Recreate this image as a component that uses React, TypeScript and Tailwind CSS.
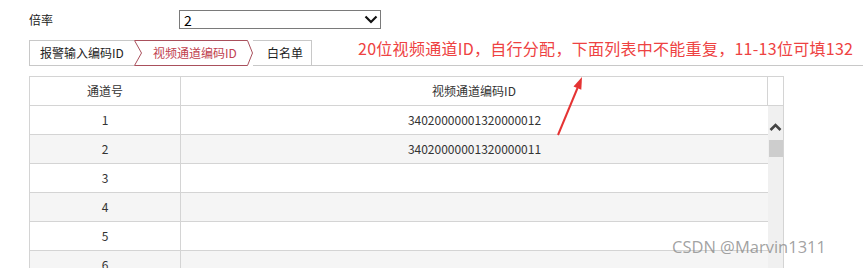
import React from "react";

const rows = [
  { no: "1", id: "34020000001320000012" },
  { no: "2", id: "34020000001320000011" },
  { no: "3", id: "" },
  { no: "4", id: "" },
  { no: "5", id: "" },
  { no: "6", id: "" },
];

export default function App() {
  return (
    <div className="relative w-[863px] h-[268px] overflow-hidden bg-white text-[12px] text-[#333] font-['Noto_Sans_CJK_SC','Noto_Sans',sans-serif]">
      <div className="pt-[10px] pl-[29px]">
        {/* 倍率 row */}
        <div className="flex items-center h-[19px]">
          <div className="w-[150px] text-[12px] text-[#222]">倍率</div>
          <div className="w-[202px] h-[19px] border border-[#7a7a7a] flex items-center justify-between pl-[4px] pr-[2px] text-[14px] leading-none text-black">
            <span>2</span>
            <svg width="14" height="9" viewBox="0 0 14 9">
              <polyline points="1.5,1.5 7,7 12.5,1.5" fill="none" stroke="#111" strokeWidth="2.2" />
            </svg>
          </div>
        </div>

        {/* Tabs row */}
        <div className="mt-[11px] flex h-[26px]">
          <div className="flex h-[26px]">
            <div className="w-[105px] h-[26px] border-l border-y border-[#c8c8c8] pl-[10px] flex items-center text-[12px] text-[#222]">
              报警输入编码ID
            </div>
            <div className="relative w-[119px] h-[26px] flex items-center pl-[19px] text-[12px] text-[#c0414f]">
              <svg className="absolute inset-0" width="119" height="26" viewBox="0 0 119 26">
                <polygon
                  points="0.5,0.5 113.5,0.5 118.5,13 113.5,25.5 0.5,25.5 7.5,13"
                  fill="#fff"
                  stroke="#a9505c"
                  strokeWidth="1"
                />
              </svg>
              <span className="relative">视频通道编码ID</span>
            </div>
            <div className="w-[59px] h-[26px] border-y border-r border-[#c8c8c8] pl-[14px] flex items-center text-[12px] text-[#222]">
              白名单
            </div>
          </div>
          <div className="flex-1 h-[26px] border-b border-[#c8c8c8] pl-[46px]">
            <div className="text-[16px] leading-[16px] tracking-[0.28px] text-[#ee4242] whitespace-nowrap">
              20位视频通道ID，自行分配，下面列表中不能重复，11-13位可填132
            </div>
          </div>
        </div>

        {/* Table */}
        <div className="mt-[10px] w-[755px]">
          <div className="flex h-[30px] border border-[#d4d4d4]">
            <div className="w-[151px] border-r border-[#d4d4d4] flex items-center justify-center">通道号</div>
            <div className="w-[587px] border-r border-[#d4d4d4] flex items-center justify-center">视频通道编码ID</div>
            <div className="w-[15px]"></div>
          </div>
          <div className="flex border-x border-[#d4d4d4]">
            <div className="w-[738px]">
              {rows.map((r, i) => (
                <div
                  key={r.no}
                  className={`flex h-[29px] border-b border-[#d4d4d4] ${i % 2 === 1 ? "bg-[#f5f5f5]" : "bg-white"}`}
                >
                  <div className="w-[151px] border-r border-[#d4d4d4] flex items-center justify-center">{r.no}</div>
                  <div className="flex-1 flex items-center justify-center">{r.id}</div>
                </div>
              ))}
            </div>
            <div className="w-[15px] bg-[#f0f0f0] flex flex-col items-center">
              <svg className="mt-[17px]" width="13" height="9" viewBox="0 0 13 9">
                <polyline points="1.5,7 6.5,2 11.5,7" fill="none" stroke="#444" strokeWidth="2.6" />
              </svg>
              <div className="mt-[8px] w-[14px] h-[17px] bg-[#cdcdcd]"></div>
            </div>
          </div>
        </div>
      </div>

      {/* Red annotation arrow */}
      <svg className="absolute left-0 top-0 pointer-events-none" width="863" height="268" viewBox="0 0 863 268">
        <line x1="558" y1="135" x2="577.5" y2="88" stroke="#e53333" strokeWidth="2" />
        <polygon points="582,77 581.3,89.8 573.5,86.6" fill="#e53333" />
      </svg>

      {/* Watermark */}
      <div className="absolute left-[672px] top-[236px] text-[16.5px] leading-[22px] text-[#8a8a8a]/80 font-['Open_Sans','Noto_Sans',sans-serif] whitespace-nowrap">
        CSDN @Marvin1311
      </div>
    </div>
  );
}
